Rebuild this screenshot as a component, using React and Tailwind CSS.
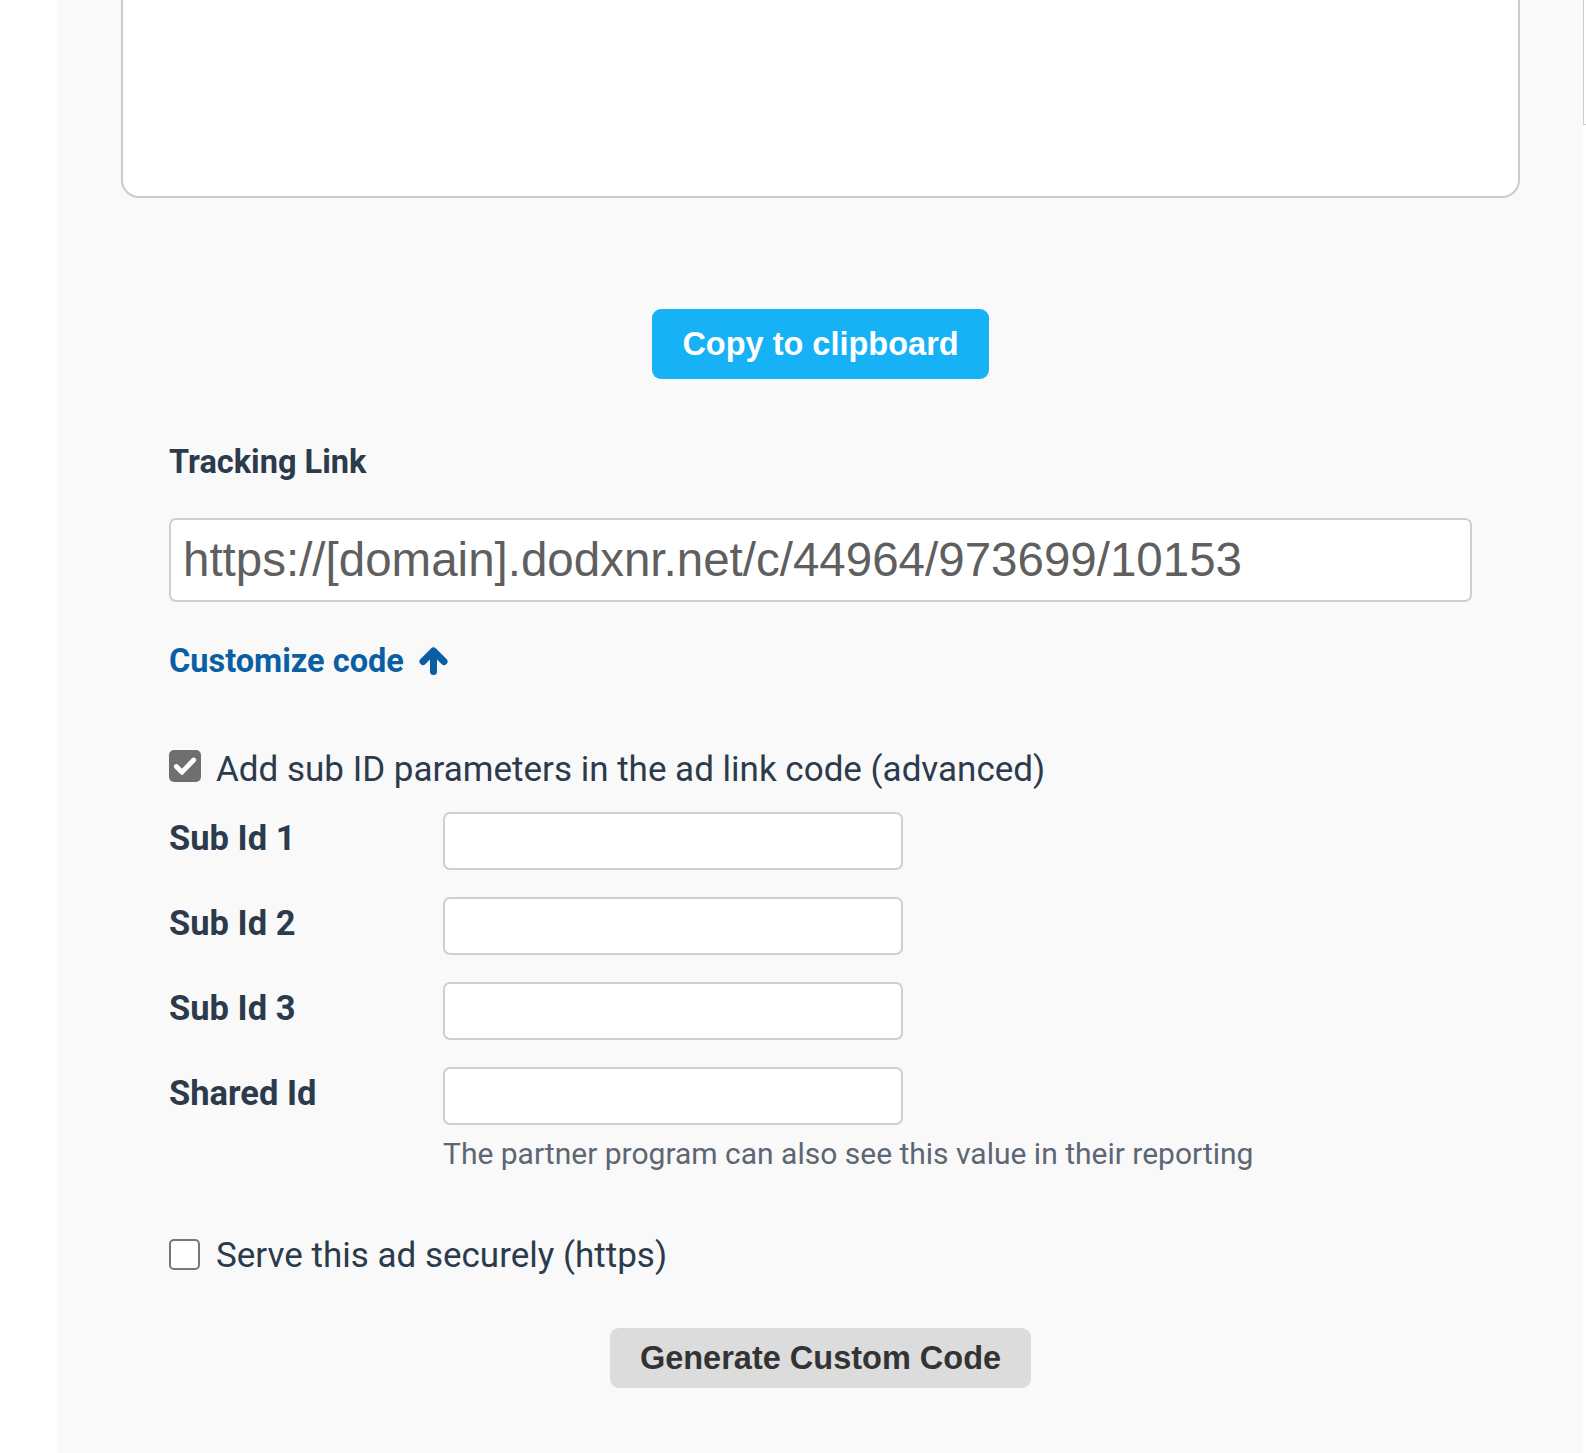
import { useState } from 'react';

const roboto = { fontFamily: 'Roboto, "Noto Sans", sans-serif' };
const arial = { fontFamily: '"Liberation Sans", Arial, sans-serif' };

function ArrowUpIcon() {
  return (
    <svg viewBox="0 0 29 28" className="w-[29px] h-[28px]">
      <path
        d="M14.5 24.5V5M4 14.5L14.5 4L25 14.5"
        fill="none"
        stroke="#0a5ea3"
        strokeWidth="7"
        strokeLinecap="round"
        strokeLinejoin="round"
      />
    </svg>
  );
}

function Checkbox({ checked, onChange, className }) {
  return (
    <button
      type="button"
      onClick={onChange}
      className={
        (checked
          ? 'w-[32px] h-[32px] rounded-[5px] bg-[#6f6f6f] flex items-center justify-center '
          : 'w-[31px] h-[31px] rounded-[5px] bg-white border-2 border-[#777777] ') +
        'shrink-0 ' +
        className
      }
    >
      {checked && (
        <svg viewBox="0 0 24 24" className="w-[26px] h-[26px]">
          <path d="M4 12.5l5.2 5.2L20 6.5" fill="none" stroke="white" strokeWidth="4.5" strokeLinecap="round" strokeLinejoin="round" />
        </svg>
      )}
    </button>
  );
}

const subIds = ['Sub Id 1', 'Sub Id 2', 'Sub Id 3', 'Shared Id'];

export default function App() {
  const [subs, setSubs] = useState(true);
  const [secure, setSecure] = useState(false);

  return (
    <div className="flex min-h-screen bg-white">
      <div className="w-[58px] shrink-0" />

      <div className="w-[1525px] shrink-0 bg-[#f9f9f9] px-[63px] pb-[65px]">
        {/* code box, top scrolled out of view */}
        <div className="h-[198px] bg-white border-2 border-t-0 border-[#cbcbcb] rounded-b-[18px]" />

        <div className="flex justify-center mt-[111px]">
          <button
            className="w-[337px] h-[70px] rounded-[9px] bg-[#17b1f5] text-white text-[32.5px] font-bold flex items-center justify-center"
            style={arial}
          >
            Copy to clipboard
          </button>
        </div>

        <div className="px-[48px]" style={roboto}>
          <div className="mt-[59px] text-[32.5px] leading-[48px] font-bold text-[#2b3b4c]">Tracking Link</div>

          <div
            className="mt-[32px] h-[84px] bg-white border-2 border-[#cfcfcf] rounded-[7px] flex items-center pl-[12px] text-[47.5px] text-[#5f5f5f]"
            style={arial}
          >
            https://[domain].dodxnr.net/c/44964/973699/10153
          </div>

          <div className="mt-[35px] flex items-center gap-[15px] text-[32.5px] leading-[48px] font-bold text-[#0a5ea3]">
            <span>Customize code</span>
            <ArrowUpIcon />
          </div>

          <div className="mt-[61px] flex items-start gap-[15px] text-[35px] leading-[48px] text-[#2b3b4c]">
            <Checkbox checked={subs} onChange={() => setSubs(!subs)} className="mt-[4px]" />
            <span>Add sub ID parameters in the ad link code (advanced)</span>
          </div>

          <div className="mt-[18px] flex flex-col gap-[27px]">
            {subIds.map((label) => (
              <div key={label} className="flex items-center">
                <div className="w-[274px] text-[34.5px] leading-[48px] font-bold text-[#2b3b4c] -mt-[6px]">{label}</div>
                <input className="w-[460px] h-[58px] bg-white border-2 border-[#cfcfcf] rounded-[7px] outline-none px-3 text-[24px]" />
              </div>
            ))}
          </div>

          <div className="mt-[8px] pl-[274px] text-[30px] leading-[42px] text-[#5c6773]">
            The partner program can also see this value in their reporting
          </div>

          <div className="mt-[57px] flex items-start gap-[16px] text-[35px] leading-[48px] text-[#2b3b4c]">
            <Checkbox checked={secure} onChange={() => setSecure(!secure)} className="mt-[7px]" />
            <span>Serve this ad securely (https)</span>
          </div>
        </div>

        <div className="flex justify-center mt-[48px]">
          <button
            className="w-[421px] h-[60px] rounded-[9px] bg-[#dcdcdc] text-[#333333] text-[32.5px] font-bold flex items-center justify-center"
            style={arial}
          >
            Generate Custom Code
          </button>
        </div>
      </div>

      <div className="w-[3px] shrink-0 bg-white">
        <div className="h-[125px] border-l border-b border-[#cccccc]" />
      </div>
    </div>
  );
}
